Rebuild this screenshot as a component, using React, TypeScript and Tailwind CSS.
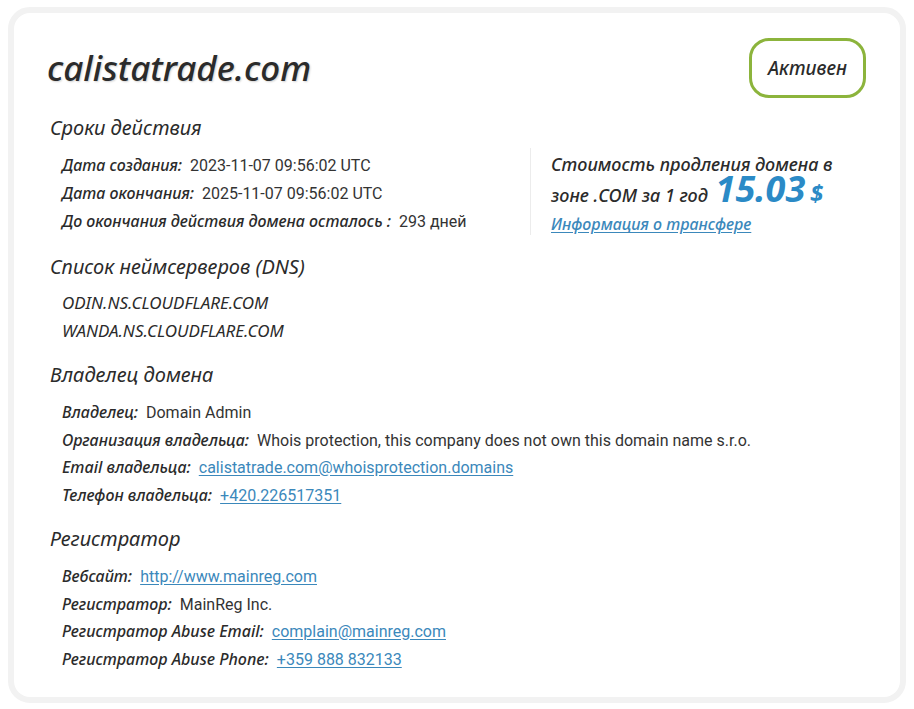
import React from "react";

type Row = {
  label: string;
  value: string;
  link?: boolean;
};

const italic = "font-['Noto_Sans',sans-serif] italic";
const plain = "font-['Roboto','Liberation_Sans',sans-serif]";

const terms: Row[] = [
  { label: "Дата создания:", value: "2023-11-07 09:56:02 UTC" },
  { label: "Дата окончания:", value: "2025-11-07 09:56:02 UTC" },
  { label: "До окончания действия домена осталось :", value: "293 дней" },
];

const owner: Row[] = [
  { label: "Владелец:", value: "Domain Admin" },
  {
    label: "Организация владельца:",
    value: "Whois protection, this company does not own this domain name s.r.o.",
  },
  { label: "Email владельца:", value: "calistatrade.com@whoisprotection.domains", link: true },
  { label: "Телефон владельца:", value: "+420.226517351", link: true },
];

const registrar: Row[] = [
  { label: "Вебсайт:", value: "http://www.mainreg.com", link: true },
  { label: "Регистратор:", value: "MainReg Inc." },
  { label: "Регистратор Abuse Email:", value: "complain@mainreg.com", link: true },
  { label: "Регистратор Abuse Phone:", value: "+359 888 832133", link: true },
];

// one "label: value" line
const InfoRow = ({ row, h }: { row: Row; h: string }) => (
  <div className={`flex items-baseline gap-2 pl-3 whitespace-nowrap ${h}`}>
    <span className={`${italic} font-medium text-[#2b2b2b] text-[16px]`}>{row.label}</span>
    {row.link ? (
      <a className={`${plain} text-[16px] text-[#3b88bb] underline underline-offset-2`}>{row.value}</a>
    ) : (
      <span className={`${plain} text-[16px] text-[#333]`}>{row.value}</span>
    )}
  </div>
);

const Heading = ({ children, className = "" }: { children: React.ReactNode; className?: string }) => (
  <h2 className={`${italic} h-7 text-[20px] leading-7 text-[#2b2b2b] ${className}`}>{children}</h2>
);

export default function App() {
  return (
    <div className="w-[914px] h-[709px] bg-white px-2 pt-[7px] pb-[6px]">
      <div className="h-full rounded-[22px] border-[6px] border-[#f2f2f2] bg-white pl-9 pr-[34px] pt-[25px]">
        {/* Header */}
        <div className="flex h-[60px] items-center justify-between">
          <h1
            className={`${italic} -ml-[3px] text-[35px] font-medium leading-[60px] text-[#2b2b2b] [text-shadow:1px_1px_2px_rgba(0,0,0,0.18)]`}
          >
            calistatrade.com
          </h1>
          <div className="flex h-[60px] w-[117px] items-center justify-center rounded-[20px] border-[3px] border-[#8cb43c]">
            <span className={`${italic} text-[19px] font-medium text-[#2b2b2b]`}>Активен</span>
          </div>
        </div>

        {/* Terms + price */}
        <div className="flex items-start">
          <div className="w-[480px]">
            <Heading className="mt-4">Сроки действия</Heading>
            <div className="mt-[9px]">
              {terms.map((r) => (
                <InfoRow key={r.label} row={r} h="h-[28px] leading-[28px]" />
              ))}
            </div>
          </div>
          <div className="mt-[50px] h-[87px] flex-1 border-l border-[#ececec] pl-5">
            <div className={`${italic} text-[18px] font-medium text-[#2b2b2b] whitespace-nowrap`}>
              <div className="mt-[3px] h-[27px] leading-[27px]">Стоимость продления домена в</div>
              <div className="mt-[4px] h-[27px] leading-[27px]">
                зоне .COM за 1 год{" "}
                <span className="ml-[3px] text-[36px] font-bold leading-[0] text-[#2b8ac6]">15.03</span>{" "}
                <span className="text-[24px] font-bold leading-[0] text-[#2b8ac6]">$</span>
              </div>
            </div>
            <a
              className={`${italic} mt-[2px] block text-[16px] font-medium leading-[26px] text-[#3b88bb] underline underline-offset-2`}
            >
              Информация о трансфере
            </a>
          </div>
        </div>

        {/* DNS */}
        <Heading className="mt-[18px]">Список неймсерверов (DNS)</Heading>
        <div className="mt-2">
          <div className={`${italic} h-7 pl-3 text-[17px] leading-7 text-[#2b2b2b]`}>ODIN.NS.CLOUDFLARE.COM</div>
          <div className={`${italic} h-7 pl-3 text-[17px] leading-7 text-[#2b2b2b]`}>WANDA.NS.CLOUDFLARE.COM</div>
        </div>

        {/* Owner */}
        <Heading className="mt-4">Владелец домена</Heading>
        <div className="mt-[10px]">
          {owner.map((r) => (
            <InfoRow key={r.label} row={r} h="h-[27.5px] leading-[27.5px]" />
          ))}
        </div>

        {/* Registrar */}
        <Heading className="mt-4">Регистратор</Heading>
        <div className="mt-[10px]">
          {registrar.map((r) => (
            <InfoRow key={r.label} row={r} h="h-[27.5px] leading-[27.5px]" />
          ))}
        </div>
      </div>
    </div>
  );
}
